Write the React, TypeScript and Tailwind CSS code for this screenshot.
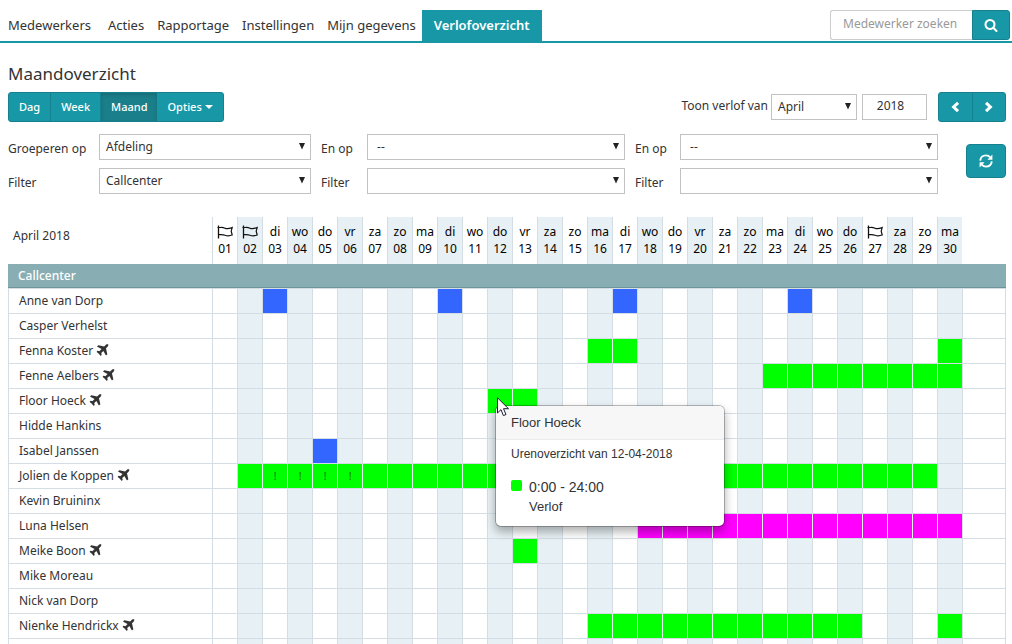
import { Fragment, type ReactNode } from "react";

const DAYS = ["zo", "ma", "di", "wo", "do", "vr", "za"];
const HOLIDAYS = [1, 2, 27];
const MONTHS = [
  "Januari", "Februari", "Maart", "April", "Mei", "Juni",
  "Juli", "Augustus", "September", "Oktober", "November", "December",
];

const COLORS = {
  leave: "bg-[#00ff00]",
  off: "bg-[#3366ff]",
  special: "bg-[#ff00ff]",
};

interface Period {
  from: number;
  to: number;
  kind: keyof typeof COLORS;
}

interface Employee {
  name: string;
  plane?: boolean;
  periods?: Period[];
  warnings?: number[];
}

const employees: Employee[] = [
  {
    name: "Anne van Dorp",
    periods: [3, 10, 17, 24].map((d) => ({ from: d, to: d, kind: "off" })),
  },
  { name: "Casper Verhelst" },
  {
    name: "Fenna Koster",
    plane: true,
    periods: [
      { from: 16, to: 17, kind: "leave" },
      { from: 30, to: 30, kind: "leave" },
    ],
  },
  { name: "Fenne Aelbers", plane: true, periods: [{ from: 23, to: 30, kind: "leave" }] },
  { name: "Floor Hoeck", plane: true, periods: [{ from: 12, to: 13, kind: "leave" }] },
  { name: "Hidde Hankins" },
  { name: "Isabel Janssen", periods: [{ from: 5, to: 5, kind: "off" }] },
  {
    name: "Jolien de Koppen",
    plane: true,
    periods: [{ from: 2, to: 29, kind: "leave" }],
    warnings: [3, 4, 5, 6],
  },
  { name: "Kevin Bruininx" },
  { name: "Luna Helsen", periods: [{ from: 18, to: 30, kind: "special" }] },
  { name: "Meike Boon", plane: true, periods: [{ from: 13, to: 13, kind: "leave" }] },
  { name: "Mike Moreau" },
  { name: "Nick van Dorp" },
  {
    name: "Nienke Hendrickx",
    plane: true,
    periods: [
      { from: 16, to: 26, kind: "leave" },
      { from: 30, to: 30, kind: "leave" },
    ],
  },
  { name: "" },
];

const days = Array.from({ length: 30 }, (_, i) => i + 1);

function Glyph({ d, className }: { d: string; className: string }) {
  return (
    <svg viewBox="0 0 1792 1792" fill="currentColor" className={className} aria-hidden="true">
      <path d={d} />
    </svg>
  );
}

const SEARCH =
  "M1216 832q0-185-131.5-316.5t-316.5-131.5-316.5 131.5-131.5 316.5 131.5 316.5 316.5 131.5 316.5-131.5 131.5-316.5zm512 832q0 52-38 90t-90 38q-54 0-90-38l-343-342q-179 124-399 124-143 0-273.5-55.5t-225-150-150-225-55.5-273.5 55.5-273.5 150-225 225-150 273.5-55.5 273.5 55.5 225 150 150 225 55.5 273.5q0 220-124 399l343 343q37 37 37 90z";
const PLANE =
  "M1568 160q44 52 12 148t-108 172l-161 161 160 696q5 19-12 33l-128 96q-7 6-19 6-4 0-7-1-15-3-21-16l-279-508-259 259 53 194q5 17-8 31l-96 96q-9 9-23 9h-2q-15-2-24-13l-189-252-252-189q-11-7-13-23-1-13 9-25l96-97q9-9 23-9 6 0 8 1l194 53 259-259-508-279q-14-8-17-24-2-16 9-27l128-128q14-13 30-8l665 159 160-160q76-76 172-108t148 12z";

function Refresh() {
  return (
    <svg viewBox="0 0 14 14" className="size-[14px]" fill="none" aria-hidden="true">
      <path d="M1.2 6.6C1.6 3.4 4 1.4 7 1.4C8.8 1.4 10.2 2.1 11.2 3.3M12.8 7.4C12.4 10.6 10 12.6 7 12.6C5.2 12.6 3.8 11.9 2.8 10.7" stroke="currentColor" strokeWidth="1.9" />
      <path d="M13.4 0.6V5.8H8.4ZM0.6 13.4V8.2H5.6Z" fill="currentColor" />
    </svg>
  );
}

function Chevron({ right = false }: { right?: boolean }) {
  return (
    <svg viewBox="0 0 10 12" className="w-[10px] h-3" fill="none" stroke="currentColor" strokeWidth="3" aria-hidden="true">
      <path d={right ? "M2 1.8L6.4 6L2 10.2" : "M8 1.8L3.6 6L8 10.2"} />
    </svg>
  );
}

function Flag() {
  return (
    <svg viewBox="0 0 16 14" className="block mx-auto w-4 h-[14px]" fill="none" stroke="#111" aria-label="Feestdag">
      <path d="M1.5 0.5V13.5" strokeWidth="1.3" />
      <path d="M0.5 2.5H3C4.5 2.2 6 2.2 8 3.2S12.5 3.6 15.2 2.5L14.2 6.2L15.2 10C12.5 11 10 11 8 10.2S4.5 9.4 2 9.7" strokeWidth="1.2" />
    </svg>
  );
}

function Header() {
  const links = ["Acties", "Rapportage", "Instellingen", "Mijn gegevens"];
  return (
    <header className="flex justify-between pt-[10px] pl-2 pr-[2px] border-b-2 border-[#1897a6]">
      <nav className="flex text-[13px] leading-[31px] whitespace-nowrap">
        <a href="#" className="mr-[17px]">
          Medewerkers
        </a>
        <div className="flex gap-[13px] mr-[6px]">
          {links.map((link) => (
            <a key={link} href="#">
              {link}
            </a>
          ))}
        </div>
        <a href="#" className="px-3 bg-[#1897a6] text-white font-semibold" aria-current="page">
          Verlofoverzicht
        </a>
      </nav>
      <form className="flex h-[30px]">
        <input
          type="text"
          aria-label="Medewerker zoeken"
          placeholder="Medewerker zoeken"
          className="w-[142px] pl-3 pb-[2px] text-xs rounded-l-[3px] border border-r-0 border-[#ccc] placeholder:text-[#999]"
        />
        <button
          type="button"
          aria-label="Zoeken"
          className="w-[38px] flex items-center justify-center rounded-r-[3px] bg-[#1897a6] border border-[#15818e] text-white"
        >
          <Glyph d={SEARCH} className="w-[14px] h-[14px]" />
        </button>
      </form>
    </header>
  );
}

function SelectBox({ id, label, value, options, className }: {
  id: string;
  label?: string;
  value: string;
  options?: string[];
  className: string;
}) {
  return (
    <div className={`relative ${className}`}>
      <select
        id={id}
        aria-label={label}
        defaultValue={value}
        className="block w-full h-[26px] pl-[6px] appearance-none bg-white border border-[#c2c2c2] text-xs leading-4"
      >
        {(options ?? [value]).map((option) => (
          <option key={option}>{option}</option>
        ))}
      </select>
      <svg viewBox="0 0 8 8" className="absolute right-[5px] top-2 size-2 pointer-events-none" aria-hidden="true">
        <path d="M1 1H7L4 7.5Z" fill="#222" />
      </svg>
    </div>
  );
}

function Toolbar() {
  const button = "px-[10px] border-r border-[#15818e]";
  return (
    <div className="flex justify-between">
      <div className="flex h-[30px] rounded-[3px] overflow-hidden border border-[#15818e] bg-[#1897a6] text-white text-[11px] font-medium">
        <button type="button" className={button}>Dag</button>
        <button type="button" className={button}>Week</button>
        <button type="button" className="px-[10px] bg-[#1a7f8b] shadow-[inset_0_2px_4px_rgba(0,0,0,0.15)]">
          Maand
        </button>
        <button type="button" className="px-[10px] flex items-center gap-[3px]">
          Opties
          <svg viewBox="0 0 8 4" className="w-2 h-1" fill="currentColor" aria-hidden="true">
            <path d="M0 0H8L4 4Z" />
          </svg>
        </button>
      </div>
      <div className="flex">
        <label htmlFor="month" className="mr-[3px] text-xs leading-[27px]">Toon verlof van</label>
        <SelectBox id="month" value="April" options={MONTHS} className="w-[86px] mt-[2px]" />
        <input
          type="text"
          aria-label="Jaar"
          defaultValue="2018"
          className="w-[65px] h-[26px] mt-[2px] ml-[5px] pb-1 pr-2 text-xs text-center border border-[#c2c2c2]"
        />
        <div className="flex h-[30px] w-[68px] ml-[11px] rounded-[3px] border border-[#15818e] bg-[#1897a6] text-white">
          <button type="button" aria-label="Vorige" className="flex-1 flex items-center justify-center border-r border-[#15818e]">
            <Chevron />
          </button>
          <button type="button" aria-label="Volgende" className="flex-1 flex items-center justify-center">
            <Chevron right />
          </button>
        </div>
      </div>
    </div>
  );
}

function Filters() {
  const groups = [
    { label: "Groeperen op", value: "Afdeling", filter: "Callcenter" },
    { label: "En op", value: "\u00a0--", filter: "" },
    { label: "En op", value: "\u00a0--", filter: "" },
  ];
  return (
    <div className="flex justify-between items-start mt-3">
      <div className="grid grid-cols-[91px_212px_56px_258px_55px_258px] gap-y-1 text-xs">
        {groups.map((g, i) => (
          <Fragment key={i}>
            <label htmlFor={`group-${i}`} className={`row-start-1 leading-[30px] ${i ? "ml-[10px]" : ""}`}>
              {g.label}
            </label>
            <SelectBox id={`group-${i}`} value={g.value} className="row-start-1" />
          </Fragment>
        ))}
        {groups.map((g, i) => (
          <Fragment key={i}>
            <label htmlFor={`filter-${i}`} className={`row-start-2 leading-[30px] ${i ? "ml-[10px]" : ""}`}>
              Filter
            </label>
            <SelectBox id={`filter-${i}`} value={g.filter} className="row-start-2" />
          </Fragment>
        ))}
      </div>
      <button
        type="button"
        aria-label="Vernieuwen"
        className="mt-[10px] w-10 h-[34px] flex items-center justify-center rounded-[4px] border border-[#15818e] bg-[#1897a6] text-white"
      >
        <Refresh />
      </button>
    </div>
  );
}

function LeavePopover() {
  return (
    <div
      role="tooltip"
      className="absolute z-10 left-[7px] top-4 w-[230px] h-[122px] text-left rounded-[6px] border border-black/25 bg-white bg-clip-padding shadow-[0_5px_10px_rgba(0,0,0,0.3)] font-['Liberation_Sans',Arial,sans-serif] text-[#333]"
    >
      <h3 className="px-[15px] text-[13px] leading-[33px] rounded-t-[5px] bg-[#f7f7f7] border-b border-[#ebebeb]">
        Floor Hoeck
      </h3>
      <div className="px-[15px] pt-[5px]">
        <p className="text-xs leading-[18px]">Urenoverzicht van 12-04-2018</p>
        <div className="flex gap-[7px] mt-[14px]">
          <span className="mt-[3px] size-[11px] rounded-[2px] bg-[#00ff00]" />
          <div>
            <p className="text-sm leading-5">0:00 - 24:00</p>
            <p className="text-[13px] leading-5">Verlof</p>
          </div>
        </div>
      </div>
    </div>
  );
}

function Cursor() {
  return (
    <svg viewBox="0 0 13 20" className="absolute z-20 left-[9px] top-2 w-[13px] h-5" aria-hidden="true">
      <path d="M0.5 0.8V16L4 12.6L6.4 18.6L9 17.5L6.5 11.7H11.5Z" fill="#fff" stroke="#1a1a2e" />
    </svg>
  );
}

function DayCell({ employee, day, children }: { employee: Employee; day: number; children?: ReactNode }) {
  const find = (d: number) => employee.periods?.find((p) => d >= p.from && d <= p.to);
  const period = find(day);
  const stripe = day % 2 === 0 ? "bg-[#e7f0f4]" : "bg-white";
  const border = period && find(day - 1) ? "border-l-[#e6f2ec]" : "border-l-[#d3dde3]";
  return (
    <td
      className={`relative h-[25px] border-t border-l border-t-[#d3dde3] bg-clip-padding text-center text-[10px] leading-6 text-[#0b6b0b] ${border} ${period ? COLORS[period.kind] : stripe}`}
    >
      {employee.warnings?.includes(day) && "!"}
      {children}
    </td>
  );
}

function MonthTable() {
  return (
    <table className="w-full mt-[19px] table-fixed border-separate border-spacing-0 text-xs">
      <colgroup>
        <col className="w-[204px]" />
        {days.map((d) => (
          <col key={d} className="w-[25px]" />
        ))}
        <col />
      </colgroup>
      <thead>
        <tr className="h-[47px]">
          <th className="pl-[5px] pb-[10px] text-left font-normal">April 2018</th>
          {days.map((d) => (
            <th
              key={d}
              className={`pt-[6px] align-top border-l border-[#d3dde3] font-normal text-black leading-[17px] ${d % 2 === 0 ? "bg-[#e7f0f4]" : ""}`}
            >
              <div className="h-[17px] flex items-center">
                {HOLIDAYS.includes(d) ? <Flag /> : <span className="mx-auto">{DAYS[(d - 1) % 7]}</span>}
              </div>
              {String(d).padStart(2, "0")}
            </th>
          ))}
          <td />
        </tr>
      </thead>
      <tbody>
        <tr>
          <th
            colSpan={32}
            className="h-6 pl-[10px] text-left font-medium leading-[22px] text-white bg-[#88adb2] border-b border-[#6d969c]"
          >
            Callcenter
          </th>
        </tr>
        {employees.map((employee) => (
          <tr key={employee.name}>
            <td className="h-[25px] pl-[10px] border-t border-l border-[#d3dde3] leading-6 whitespace-nowrap">
              {employee.name}
              {employee.plane && <Glyph d={PLANE} className="inline-block ml-[2px] -mt-[2px] size-[15px]" />}
            </td>
            {days.map((d) => (
              <DayCell key={d} employee={employee} day={d}>
                {employee.name === "Floor Hoeck" && d === 12 && (
                  <>
                    <LeavePopover />
                    <Cursor />
                  </>
                )}
              </DayCell>
            ))}
            <td className="border-t border-x border-[#d3dde3]" />
          </tr>
        ))}
      </tbody>
    </table>
  );
}

export default function App() {
  return (
    <div className="min-w-[1000px] bg-white font-['Noto_Sans',sans-serif] text-[#333]">
      <Header />
      <main className="pl-2 pr-[6px]">
        <h1 className="pt-[19px] pb-[6px] text-[17px] leading-6">Maandoverzicht</h1>
        <Toolbar />
        <Filters />
        <MonthTable />
      </main>
    </div>
  );
}
